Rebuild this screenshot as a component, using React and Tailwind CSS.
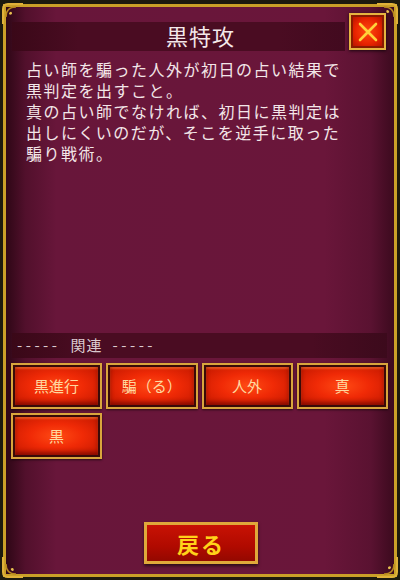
const RELATED = ["黒進行", "騙（る）", "人外", "真", "黒"];

const LINES = [
  "占い師を騙った人外が初日の占い結果で",
  "黒判定を出すこと。",
  "真の占い師でなければ、初日に黒判定は",
  "出しにくいのだが、そこを逆手に取った",
  "騙り戦術。",
];

const jp = { fontFamily: '"Noto Sans CJK JP", "Noto Sans", sans-serif' };

function Corner({ className }) {
  return (
    <svg className={className} width="22" height="22" viewBox="0 0 22 22" fill="none">
      <path d="M1 21 V6 Q1 1 6 1 H21" stroke="#e0b23a" strokeWidth="2" />
      <path d="M4 14 Q4 4 14 4" stroke="#b8871e" strokeWidth="1.5" />
      <path d="M7 10 Q10 7 10 11 Q7 13 7 10 Z" fill="#e8c050" />
    </svg>
  );
}

function RelatedButton({ label }) {
  return (
    <button className="h-[46px] border-2 border-[#d9a53c] bg-[#3a0a08] p-[2px] shadow-[0_1px_2px_rgba(0,0,0,0.6)]">
      <div className="w-full h-full flex items-center justify-center bg-[radial-gradient(ellipse_at_center,#ff4a14_0%,#f02a06_45%,#c41800_100%)] shadow-[inset_0_-3px_4px_rgba(90,0,0,0.6),inset_0_2px_2px_rgba(255,140,60,0.5)]">
        <span className="text-[15px] text-[#ffd9a0]" style={jp}>{label}</span>
      </div>
    </button>
  );
}

export default function App() {
  return (
    <div className="w-[400px] h-[580px] bg-[#1c1a0e] pt-[4px] px-[3px] pb-[3px]" style={jp}>
      <div className="relative h-full border-[3px] border-[#caa028] bg-[linear-gradient(to_right,#2e0716_0%,#52102c_5%,#68163a_13%,#6a163a_82%,#5a1231_94%,#3c0a1e_100%)] flex flex-col">
        <Corner className="absolute -top-[4px] -left-[4px]" />
        <Corner className="absolute -top-[4px] -right-[4px] rotate-90" />
        <Corner className="absolute -bottom-[4px] -left-[4px] -rotate-90" />
        <Corner className="absolute -bottom-[4px] -right-[4px] rotate-180" />

        {/* title row */}
        <div className="flex items-start pl-[6px] pr-[8px]">
          <div className="flex-1 mt-[15px] h-[29px] bg-[linear-gradient(to_right,#3a0818,#4a0c22_20%,#4a0c22_80%,#420a1f)] flex items-center justify-center pl-[44px]">
            <span className="text-[22px] leading-[26px] -mt-[3px] text-[#f4e8ea] tracking-[1px]">黒特攻</span>
          </div>
          <button className="ml-[4px] mt-[6px] w-[37px] h-[37px] border-2 border-[#e6b440] bg-[#8a1a00] p-[2px] shadow-[0_1px_3px_rgba(0,0,0,0.7)]">
            <div className="w-full h-full flex items-center justify-center bg-[radial-gradient(circle,#ff4a10_0%,#e82400_60%,#b81400_100%)]">
              <svg width="20" height="20" viewBox="0 0 20 20">
                <path d="M2 2 L18 18 M18 2 L2 18" stroke="#ffd23a" strokeWidth="2.6" strokeLinecap="round" />
              </svg>
            </div>
          </button>
        </div>

        {/* description */}
        <div className="mt-[8px] pl-[20px] text-[16px] tracking-[1.5px] text-[#f3e6e8]">
          {LINES.map((l) => (
            <div key={l} className="h-[21px] leading-[21px] whitespace-nowrap">{l}</div>
          ))}
        </div>

        <div className="flex-1" />

        {/* related */}
        <div className="ml-[6px] mr-[7px] h-[25px] bg-[linear-gradient(to_right,#3a0818,#4a0c22_20%,#4a0c22_80%,#3c0a1c)] flex items-center pl-[5px] gap-[10px] text-[15px] text-[#dccbcf]">
          <span className="tracking-[3.5px]">-----</span>
          <span className="tracking-[1px]">関連</span>
          <span className="tracking-[3.5px]">-----</span>
        </div>
        <div className="grid grid-cols-4 gap-x-[4px] gap-y-[4px] pl-[5px] pr-[6px] mt-[5px]">
          {RELATED.map((r) => (
            <RelatedButton key={r} label={r} />
          ))}
        </div>

        <div className="h-[63px]" />

        {/* back */}
        <div className="flex justify-center pl-[2px]">
          <button className="w-[114px] h-[42px] border-[3px] border-[#e0a83a] bg-[#a01000] shadow-[0_2px_3px_rgba(0,0,0,0.6),inset_0_0_0_1px_#ffcf60]">
            <div className="w-full h-full flex items-center justify-center bg-[linear-gradient(to_bottom,#c81204,#b00a00_60%,#940800)]">
              <span className="text-[22px] font-bold text-[#ffd21a] tracking-[2px]">戻る</span>
            </div>
          </button>
        </div>
        <div className="h-[10px]" />
      </div>
    </div>
  );
}
